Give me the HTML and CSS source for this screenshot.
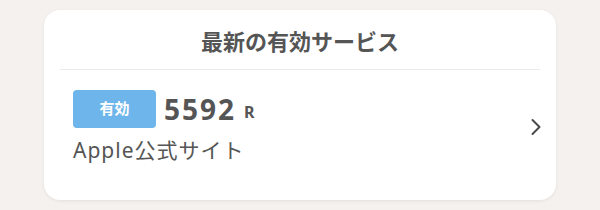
FILE: index.html
```html
<!DOCTYPE html>
<html lang="ja">
<head>
<meta charset="utf-8">
<link rel="stylesheet" href="styles.css">
</head>
<body>
<div class="card">
  <div class="card-header">最新の有効サービス</div>
  <div class="service-row">
    <div class="service-info">
      <div class="status-line">
        <span class="badge">有効</span>
        <span class="points">5592</span>
        <span class="unit">R</span>
      </div>
      <div class="service-name">Apple公式サイト</div>
    </div>
    <svg class="chevron" width="10" height="18" viewBox="0 0 10 18">
      <path d="M1.5 2 L8.5 9 L1.5 16" fill="none" stroke="#4a4a4a" stroke-width="2" stroke-linecap="round" stroke-linejoin="round"/>
    </svg>
  </div>
</div>
</body>
</html>
```

FILE: styles.css
```css
html, body {
  margin: 0;
  padding: 0;
}
body {
  background: #f4f1ef;
  font-family: "Noto Sans", "Noto Sans CJK JP", sans-serif;
  color: #555555;
  padding: 10px 44px 10px 44px;
}
.card {
  width: 512px;
  height: 190px;
  box-sizing: border-box;
  background: #ffffff;
  border-radius: 16px;
  box-shadow: 0 1px 3px rgba(120, 100, 90, 0.12);
  padding: 0 16px;
}
.card-header {
  height: 60px;
  line-height: 60px;
  text-align: center;
  font-size: 22px;
  font-weight: 700;
  color: #555555;
  border-bottom: 1px solid #ebebeb;
  box-sizing: border-box;
  font-family: "Noto Sans CJK JP", sans-serif;
}
.service-row {
  display: flex;
  align-items: center;
  justify-content: space-between;
  padding: 20px 0 0 13px;
}
.service-info {
  display: flex;
  flex-direction: column;
  gap: 8px;
}
.status-line {
  display: flex;
  align-items: center;
}
.badge {
  width: 83px;
  height: 38px;
  border-radius: 4px;
  background: #6db5ea;
  color: #ffffff;
  font-size: 15px;
  font-weight: 700;
  display: flex;
  align-items: center;
  justify-content: center;
  padding-bottom: 3px;
  box-sizing: border-box;
  font-family: "Noto Sans CJK JP", sans-serif;
  margin-right: 8px;
}
.points {
  font-size: 28px;
  font-weight: 700;
  letter-spacing: 2px;
  color: #555555;
  line-height: 1;
  margin-top: -1px;
}
.unit {
  font-size: 16px;
  font-weight: 700;
  margin-left: 8px;
  color: #555555;
  line-height: 1;
  margin-top: 6px;
}
.service-name {
  font-size: 21px;
  letter-spacing: 1px;
  line-height: 28px;
  color: #555555;
}
.chevron {
  display: block;
  margin-right: -1px;
}
```
